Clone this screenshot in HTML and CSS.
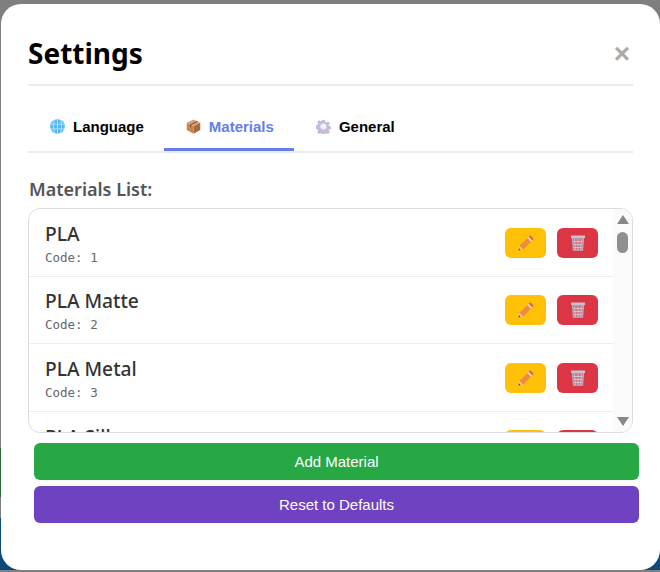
FILE: index.html
```html
<!DOCTYPE html>
<html lang="en">
<head>
    <meta charset="UTF-8">
    <meta name="viewport" content="width=device-width, initial-scale=1.0">
    <title>Settings</title>
    <link rel="stylesheet" href="styles.css">
</head>
<body>
    <svg class="sprites" width="0" height="0">
        <symbol id="icon-pencil" viewBox="0 0 16 16">
            <path d="M.6 15.4l1-4.6 3.6 3.6z" fill="#f3c9a0"/>
            <path d="M.6 15.4l.5-2.1 1.6 1.6z" fill="#4a3a3a"/>
            <path d="M1.6 10.8L9.4 3l3.6 3.6-7.8 7.8z" fill="#f08a3c"/>
            <path d="M9.4 3l1.2-1.2 3.6 3.6L13 6.6z" fill="#e8e4e4"/>
            <path d="M10.6 1.8l1-1c.4-.4 1-.4 1.4 0l2.2 2.2c.4.4.4 1 0 1.4l-1 1z" fill="#f0644c"/>
        </symbol>
        <symbol id="icon-trash" viewBox="0 0 14 16">
            <path d="M1.4 3h11.2l-1 12.3H2.4z" fill="#cf6f80" stroke="#b4b4c0" stroke-width="1.1"/>
            <path d="M3.6 4l.7 11M7 4v11M10.4 4l-.7 11M2.4 6.5h9.2M2.6 9.5h8.8M2.8 12.5h8.4" stroke="#cfcfd8" stroke-width=".8" fill="none"/>
            <path d="M0 .5h14v2.5H0z" fill="#c4c4ce"/>
        </symbol>
        <symbol id="icon-globe" viewBox="0 0 16 16">
            <circle cx="8" cy="8" r="7.8" fill="#4fb8f5"/>
            <path d="M.8 5.5h14.4M.8 10.5h14.4M8 .5v15M4.8 1.5c-1.6 4-1.6 9 0 13M11.2 1.5c1.6 4 1.6 9 0 13" stroke="#c4e8fc" stroke-width=".9" fill="none"/>
        </symbol>
        <symbol id="icon-box" viewBox="0 0 16 16">
            <path d="M8 .4l7.2 3.6L8 7.8.8 4z" fill="#d9a273"/>
            <path d="M.8 4L8 7.8v7.8l-7.2-3.8z" fill="#c78650"/>
            <path d="M15.2 4L8 7.8v7.8l7.2-3.8z" fill="#a86a3a"/>
            <path d="M4.4 5.9l7.2-3.9 1.2.6L5.6 6.5v2.4L4.4 8.3z" fill="#7c5238"/>
        </symbol>
        <symbol id="icon-gear" viewBox="0 0 16 16">
            <path d="M6.6.8h2.8l.4 2 1.5.7 1.8-1.1 2 2-1.1 1.8.6 1.4 2 .5v2.8l-2 .4-.6 1.5 1.1 1.8-2 2-1.8-1.1-1.5.6-.4 2H6.6l-.4-2-1.5-.6-1.8 1.1-2-2 1.1-1.8-.6-1.5-2-.4V6.6l2-.5.6-1.4-1.1-1.8 2-2 1.8 1.1 1.5-.7z" transform="translate(0.4 0.4) scale(.95)" fill="#c6bcd9"/>
            <circle cx="8" cy="8" r="3.2" fill="#f4f1f8"/>
        </symbol>
    </svg>

    <div class="backdrop">
        <div class="modal">
            <div class="modal-header">
                <h1>Settings</h1>
                <span class="close">&times;</span>
            </div>

            <div class="tabs">
                <div class="tab">
                    <svg class="tab-icon"><use href="#icon-globe"/></svg>
                    Language
                </div>
                <div class="tab active">
                    <svg class="tab-icon"><use href="#icon-box"/></svg>
                    Materials
                </div>
                <div class="tab">
                    <svg class="tab-icon"><use href="#icon-gear"/></svg>
                    General
                </div>
            </div>

            <h2 class="list-title">Materials List:</h2>

            <div class="material-list">
                <div class="rows">
                    <div class="row">
                        <div class="row-info">
                            <div class="name">PLA</div>
                            <div class="code">Code: 1</div>
                        </div>
                        <div class="row-actions">
                            <button class="icon-btn edit"><svg><use href="#icon-pencil"/></svg></button>
                            <button class="icon-btn delete"><svg><use href="#icon-trash"/></svg></button>
                        </div>
                    </div>
                    <div class="row">
                        <div class="row-info">
                            <div class="name">PLA Matte</div>
                            <div class="code">Code: 2</div>
                        </div>
                        <div class="row-actions">
                            <button class="icon-btn edit"><svg><use href="#icon-pencil"/></svg></button>
                            <button class="icon-btn delete"><svg><use href="#icon-trash"/></svg></button>
                        </div>
                    </div>
                    <div class="row">
                        <div class="row-info">
                            <div class="name">PLA Metal</div>
                            <div class="code">Code: 3</div>
                        </div>
                        <div class="row-actions">
                            <button class="icon-btn edit"><svg><use href="#icon-pencil"/></svg></button>
                            <button class="icon-btn delete"><svg><use href="#icon-trash"/></svg></button>
                        </div>
                    </div>
                    <div class="row">
                        <div class="row-info">
                            <div class="name">PLA Silk</div>
                            <div class="code">Code: 4</div>
                        </div>
                        <div class="row-actions">
                            <button class="icon-btn edit"><svg><use href="#icon-pencil"/></svg></button>
                            <button class="icon-btn delete"><svg><use href="#icon-trash"/></svg></button>
                        </div>
                    </div>
                </div>
                <div class="scrollbar">
                    <span class="arrow-up"></span>
                    <span class="thumb"></span>
                    <span class="arrow-down"></span>
                </div>
            </div>

            <div class="actions">
                <button class="wide-btn add">Add Material</button>
                <button class="wide-btn reset">Reset to Defaults</button>
            </div>
        </div>
    </div>
</body>
</html>
```

FILE: styles.css
```css
* {
    box-sizing: border-box;
}

html, body {
    margin: 0;
    height: 100%;
    overflow: hidden;
}

body {
    font-family: "Liberation Sans", Arial, sans-serif;
    color: #333;
    background-color: #7f7f7f;
}

.sprites {
    position: absolute;
}

/* page behind the overlay, only corners and the left edge show */
.backdrop {
    height: 572px;
    padding: 4px 0 2px 1px;
    background: linear-gradient(to bottom,
        #7f7f7f 0, #7f7f7f 448px,
        #2a6a35 448px, #2a6a35 497px,
        #7f7f7f 497px, #7f7f7f 518px,
        #0c4a7c 518px, #0c4a7c 570px,
        #7f7f7f 570px);
}

.modal {
    height: 566px;
    width: 659px;
    padding: 28px 27px 0 27px;
    background-color: #fff;
    border-radius: 20px;
}

.modal-header {
    display: flex;
    justify-content: space-between;
    align-items: center;
    height: 54px;
    border-bottom: 2px solid #e9ecef;
}

.modal-header h1 {
    margin: 0 0 10px;
    font-family: "Noto Sans", sans-serif;
    font-size: 28px;
    font-weight: 700;
    line-height: 38px;
    color: #000;
}

.close {
    margin: 0 3px 8px 0;
    font-size: 28px;
    font-weight: 700;
    line-height: 28px;
    color: #aaa;
}

.tabs {
    display: flex;
    height: 67px;
    padding-top: 18px;
    border-bottom: 2px solid #e9ecef;
}

.tab {
    display: flex;
    align-items: center;
    gap: 8px;
    height: 47px;
    padding: 0 20px 0 22px;
    font-size: 15px;
    font-weight: 700;
    color: #000;
    border-bottom: 3px solid transparent;
}

.tab.active {
    color: #667eea;
    border-bottom-color: #667eea;
}

.tab-icon {
    width: 15px;
    height: 15px;
}

.list-title {
    margin: 24px 0 6px 1px;
    font-family: "Noto Sans", sans-serif;
    font-size: 18px;
    font-weight: 600;
    line-height: 25px;
    color: #555;
}

.material-list {
    display: flex;
    height: 225px;
    border: 1px solid #ddd;
    border-radius: 12px;
    overflow: hidden;
}

.rows {
    flex: 1;
    overflow: hidden;
}

.row {
    display: flex;
    justify-content: space-between;
    align-items: center;
    height: 67.6px;
    padding: 0 15px 0 16px;
    border-bottom: 1px solid #eee;
}

.row-info {
    padding-top: 1px;
}

.name {
    font-family: "Noto Sans", sans-serif;
    font-size: 19.2px;
    font-weight: 500;
    line-height: 26px;
    color: #333;
}

.code {
    margin-top: 3px;
    font-family: "DejaVu Sans Mono", monospace;
    font-size: 12.5px;
    line-height: 15px;
    color: #666;
}

.row-actions {
    display: flex;
    gap: 11px;
    padding-top: 0.6px;
}

.icon-btn {
    display: flex;
    align-items: center;
    justify-content: center;
    width: 41px;
    height: 30px;
    padding: 0;
    border: none;
    border-radius: 6px;
}

.icon-btn svg {
    width: 16px;
    height: 16px;
}

.edit {
    background-color: #ffc107;
}

.delete {
    background-color: #dc3545;
}

.scrollbar {
    display: flex;
    flex-direction: column;
    align-items: center;
    width: 19px;
    background-color: #fafafa;
}

.arrow-up, .arrow-down {
    width: 0;
    height: 0;
    border-left: 6.5px solid transparent;
    border-right: 6.5px solid transparent;
}

.arrow-up {
    margin-top: 6px;
    border-bottom: 9px solid #888;
}

.arrow-down {
    margin-top: auto;
    margin-bottom: 6px;
    border-top: 9px solid #888;
}

.thumb {
    width: 11px;
    height: 21px;
    margin-top: 8px;
    background-color: #8f8f8f;
    border-radius: 6px;
}

.actions {
    display: flex;
    flex-direction: column;
    gap: 6px;
    width: 605px;
    margin: 10px 0 0 6px;
}

.wide-btn {
    height: 37px;
    border: none;
    border-radius: 6px;
    font-family: "Liberation Sans", Arial, sans-serif;
    font-size: 15px;
    color: #fff;
}

.add {
    background-color: #28a745;
}

.reset {
    background-color: #6f42c1;
}
```
